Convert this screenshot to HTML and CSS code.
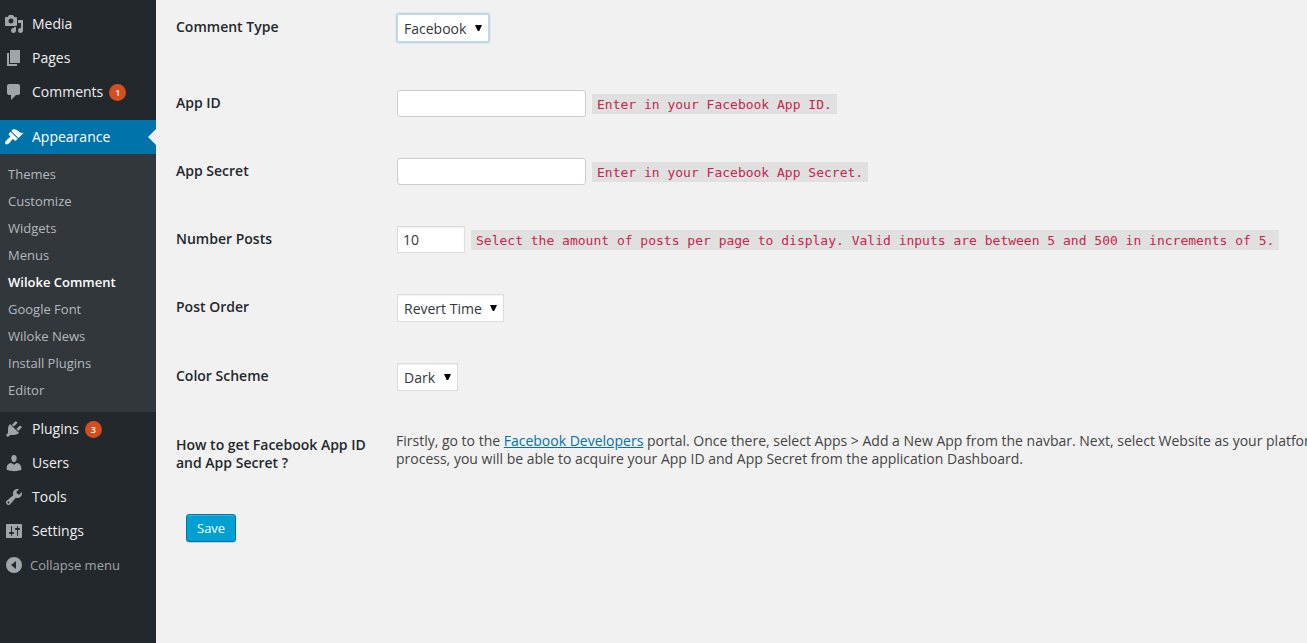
FILE: index.html
```
<!DOCTYPE html>
<html lang="en">
<head>
    <meta charset="UTF-8">
    <meta name="viewport" content="width=device-width, initial-scale=1.0">
    <title>Wiloke Comment</title>
    <link rel="stylesheet" href="styles.css">
</head>
<body>

    <!-- Admin Menu -->
    <nav class="sidebar">
        <ul class="menu">
            <li><a href="#"><svg class="icon" viewBox="0 0 20 20"><path d="M13 11V4c0-.55-.45-1-1-1h-1.67L9 1H5L3.67 3H2c-.55 0-1 .45-1 1v7c0 .55.45 1 1 1h10c.55 0 1-.45 1-1zM7 4.5c1.38 0 2.5 1.12 2.5 2.5S8.38 9.5 7 9.5 4.5 8.38 4.5 7 5.62 4.5 7 4.5zM14 6h5v10.5c0 1.38-1.12 2.5-2.5 2.5S14 17.88 14 16.5s1.12-2.5 2.5-2.5c.17 0 .34.02.5.05V9h-3V6zm-4 8.05V13h2v3.5c0 1.38-1.12 2.5-2.5 2.5S7 17.88 7 16.5 8.12 14 9.5 14c.17 0 .34.02.5.05z"/></svg>Media</a></li>
            <li><a href="#"><svg class="icon" viewBox="0 0 20 20"><path d="M6 15V2h10v13H6zm-1 1h8v2H3V5h2v11z"/></svg>Pages</a></li>
            <li><a href="#"><svg class="icon" viewBox="0 0 20 20"><path d="M5 2h9c1.1 0 2 .9 2 2v7c0 1.1-.9 2-2 2h-2l-5 5v-5H5c-1.1 0-2-.9-2-2V4c0-1.1.9-2 2-2z"/></svg>Comments <span class="badge">1</span></a></li>
        </ul>

        <ul class="menu">
            <li>
                <a href="#" class="current"><svg class="icon" viewBox="0 0 20 20"><path d="M14.48 11.06L7.41 3.99l1.5-1.5c.5-.56 2.3-.47 3.51.32 1.21.8 1.43 1.28 2.91 2.1 1.18.64 2.45 1.26 4.45.85zm-.71.71L6.7 4.7 4.93 6.47c-.39.39-.39 1.02 0 1.41l1.06 1.06c.39.39.39 1.03 0 1.42-.6.6-1.43 1.11-2.21 1.69-.35.26-.7.53-1.01.84C1.43 14.23.4 16.08 1.4 17.07c.99 1 2.84-.03 4.18-1.36.31-.31.58-.66.85-1.02.57-.78 1.08-1.61 1.69-2.21.39-.39 1.02-.39 1.41 0l1.06 1.06c.39.39 1.02.39 1.41 0z"/></svg>Appearance</a>
                <ul class="submenu">
                    <li><a href="#">Themes</a></li>
                    <li><a href="#">Customize</a></li>
                    <li><a href="#">Widgets</a></li>
                    <li><a href="#">Menus</a></li>
                    <li><a href="#" class="active">Wiloke Comment</a></li>
                    <li><a href="#">Google Font</a></li>
                    <li><a href="#">Wiloke News</a></li>
                    <li><a href="#">Install Plugins</a></li>
                    <li><a href="#">Editor</a></li>
                </ul>
            </li>
            <li><a href="#"><svg class="icon" viewBox="0 0 20 20"><path d="M13.11 4.36L9.87 7.6 8 5.73l3.24-3.24c.35-.34 1.05-.2 1.56.32.52.51.66 1.21.31 1.55zm-8 1.77l.91-1.12 9.01 9.01-1.19.84c-.71.71-2.63 1.16-3.82 1.16H6.14L4.9 17.26c-.59.59-1.54.59-2.12 0-.59-.58-.59-1.53 0-2.12l1.24-1.24v-3.88c0-1.13.4-3.19 1.09-3.89zm7.26 3.97l3.24-3.24c.34-.35 1.04-.21 1.55.31.52.51.66 1.21.31 1.55l-3.24 3.25z"/></svg>Plugins <span class="badge">3</span></a></li>
            <li><a href="#"><svg class="icon" viewBox="0 0 20 20"><path d="M10 9.25c-2.27 0-2.73-3.44-2.73-3.44C7 4.02 7.82 2 9.97 2c2.16 0 2.98 2.02 2.71 3.81 0 0-.41 3.44-2.68 3.44zm0 2.57L12.72 10c2.39 0 4.52 2.33 4.52 4.53v2.49s-3.65 1.13-7.24 1.13c-3.65 0-7.24-1.13-7.24-1.13v-2.49c0-2.25 1.94-4.48 4.47-4.48z"/></svg>Users</a></li>
            <li><a href="#"><svg class="icon" viewBox="0 0 20 20"><path d="M16.68 9.77c-1.34 1.34-3.3 1.67-4.95.99l-5.41 6.52c-.99.99-2.59.99-3.58 0s-.99-2.59 0-3.57l6.52-5.42c-.68-1.65-.35-3.61.99-4.95 1.28-1.28 3.12-1.62 4.72-1.06l-2.89 2.89 2.82 2.82 2.86-2.87c.53 1.58.18 3.39-1.08 4.65zM3.81 16.21c.4.39 1.04.39 1.43 0 .4-.4.4-1.04 0-1.43-.39-.4-1.03-.4-1.43 0-.39.39-.39 1.03 0 1.43z"/></svg>Tools</a></li>
            <li><a href="#"><svg class="icon" viewBox="0 0 20 20"><path d="M18 16V4c0-.55-.45-1-1-1H3c-.55 0-1 .45-1 1v12c0 .55.45 1 1 1h14c.55 0 1-.45 1-1zM8 11h1c.55 0 1 .45 1 1s-.45 1-1 1H8v1.5c0 .28-.22.5-.5.5s-.5-.22-.5-.5V13H6c-.55 0-1-.45-1-1s.45-1 1-1h1V5.5c0-.28.22-.5.5-.5s.5.22.5.5V11zm5-2h-1c-.55 0-1-.45-1-1s.45-1 1-1h1V5.5c0-.28.22-.5.5-.5s.5.22.5.5V7h1c.55 0 1 .45 1 1s-.45 1-1 1h-1v5.5c0 .28-.22.5-.5.5s-.5-.22-.5-.5V9z"/></svg>Settings</a></li>
        </ul>

        <button type="button" class="collapse"><svg class="icon" viewBox="0 0 20 20"><path fill-rule="evenodd" d="M10 2a8 8 0 1 0 0 16 8 8 0 0 0 0-16zM12 6v8l-5-4z"/></svg>Collapse menu</button>
    </nav>

    <!-- Settings Form -->
    <main class="content">
        <form>
            <div class="row row-type">
                <label for="comment-type">Comment Type</label>
                <div class="field">
                    <span class="select focused">
                        <select id="comment-type"><option>Facebook</option></select>
                    </span>
                </div>
            </div>
            <div class="row">
                <label for="app-id">App ID</label>
                <div class="field">
                    <input type="text" id="app-id">
                    <code>Enter in your Facebook App ID.</code>
                </div>
            </div>
            <div class="row">
                <label for="app-secret">App Secret</label>
                <div class="field">
                    <input type="text" id="app-secret">
                    <code>Enter in your Facebook App Secret.</code>
                </div>
            </div>
            <div class="row">
                <label for="number-posts">Number Posts</label>
                <div class="field">
                    <input type="number" id="number-posts" value="10" min="5" max="500" step="5">
                    <code>Select the amount of posts per page to display. Valid inputs are between 5 and 500 in increments of 5.</code>
                </div>
            </div>
            <div class="row">
                <label for="post-order">Post Order</label>
                <div class="field">
                    <span class="select">
                        <select id="post-order"><option>Revert Time</option></select>
                    </span>
                </div>
            </div>
            <div class="row">
                <label for="color-scheme">Color Scheme</label>
                <div class="field">
                    <span class="select">
                        <select id="color-scheme"><option>Dark</option></select>
                    </span>
                </div>
            </div>
            <div class="row row-help">
                <h2>How to get Facebook App ID and App Secret ?</h2>
                <p>Firstly, go to the <a href="#">Facebook Developers</a> portal. Once there, select Apps &gt; Add a New App from the navbar. Next, select Website as your platform.<br>process, you will be able to acquire your App ID and App Secret from the application Dashboard.</p>
            </div>
            <button type="submit" class="save">Save</button>
        </form>
    </main>

</body>
</html>
```
FILE: styles.css
```
/* General Styling */
* {
    box-sizing: border-box;
}
body {
    display: flex;
    min-height: 100vh;
    margin: 0;
    background: #f1f1f1;
    color: #444;
    font-family: "Open Sans", sans-serif;
    font-size: 14px;
    line-height: 18px;
}
ul {
    list-style: none;
    margin: 0;
    padding: 0;
}
/* Admin Menu */
.sidebar {
    flex: 0 0 156px;
    padding-top: 7px;
    background: #23282d;
}
.menu {
    margin-bottom: 11px;
}
.menu:last-of-type {
    margin-bottom: 0;
}
.menu a {
    display: flex;
    align-items: center;
    height: 34px;
    padding-left: 4px;
    color: #eee;
    text-decoration: none;
}
.icon {
    width: 20px;
    height: 20px;
    margin-right: 8px;
    fill: #a0a5aa;
}
.badge {
    width: 17px;
    height: 17px;
    margin-left: 6px;
    border-radius: 50%;
    background: #d54e21;
    color: #fff;
    font-size: 9px;
    font-weight: 600;
    line-height: 17px;
    text-align: center;
}
.menu .current {
    position: relative;
    background: #0073aa;
    color: #fff;
}
.current .icon {
    fill: #fff;
}
.current::after {
    content: "";
    position: absolute;
    right: 0;
    top: 9px;
    border: 8px solid transparent;
    border-left-width: 0;
    border-right-color: #f1f1f1;
}
/* Submenu */
.submenu {
    padding: 6px 0 9px;
    background: #32373c;
}
.submenu a {
    height: 27px;
    padding-left: 8px;
    color: #b4b9be;
    font-size: 13px;
}
.submenu .active {
    color: #fff;
    font-weight: 600;
}
.collapse {
    display: flex;
    align-items: center;
    width: 100%;
    height: 34px;
    padding: 0 4px;
    border: 0;
    background: none;
    color: #a0a5aa;
    font-family: inherit;
    font-size: 13px;
    cursor: pointer;
}
.collapse .icon {
    margin-right: 6px;
}
/* Settings Form */
.content {
    flex: 1;
    min-width: 0;
    padding: 14px 0 14px 20px;
    overflow: hidden;
}
.row {
    display: flex;
    align-items: flex-start;
    margin-bottom: 40px;
}
.row-type {
    margin-bottom: 47px;
}
.row label,
.row h2 {
    flex: 0 0 200px;
    margin: 0 20px 0 0;
    padding-top: 4px;
    color: #23282d;
    font-size: 14px;
    font-weight: 600;
    line-height: 18px;
}
.row p {
    margin: 0;
    white-space: nowrap;
}
.row p a {
    color: #0073aa;
}
.field {
    display: flex;
    align-items: flex-start;
    min-height: 28px;
    padding-left: 1px;
}
input,
select {
    border: 1px solid #ddd;
    background: #fff;
    box-shadow: inset 0 1px 2px rgba(0, 0, 0, 0.07);
    color: #32373c;
    font-family: inherit;
    font-size: 14px;
}
input {
    height: 27px;
    padding: 3px 5px;
}
input[type="text"] {
    width: 189px;
    border-color: #ccc;
    border-radius: 3px;
    box-shadow: none;
}
input[type="number"] {
    width: 68px;
    appearance: textfield;
}
code {
    margin: 4px 0 0 6px;
    padding: 2px 5px 0;
    background: #e0e0e0;
    color: #c7254e;
    font-family: "DejaVu Sans Mono", monospace;
    font-size: 13px;
    white-space: nowrap;
}
/* Drop-downs */
.select {
    display: flex;
    position: relative;
    margin-bottom: 1px;
}
.select::after {
    content: "";
    position: absolute;
    right: 7px;
    top: 11px;
    width: 7px;
    height: 6px;
    background: #000;
    clip-path: polygon(0 0, 100% 0, 60% 100%, 40% 100%);
    pointer-events: none;
}
select {
    appearance: none;
    height: 28px;
    padding: 0 21px 0 6px;
    border-radius: 0;
}
.focused select {
    border-color: #c2d9e3;
    box-shadow: 0 0 2px rgba(30, 140, 190, 0.8);
}
/* Save Button */
.row-help {
    margin-bottom: 42px;
}
.save {
    height: 28px;
    margin-left: 10px;
    padding: 0 10px;
    border: 1px solid #0073aa;
    border-radius: 3px;
    background: #00a0d2;
    box-shadow: inset 0 1px 0 rgba(120, 200, 230, 0.5), 0 1px 0 rgba(0, 0, 0, 0.15);
    color: #fff;
    font-family: inherit;
    font-size: 13px;
    cursor: pointer;
}
.save:hover {
    background: #0091cd;
}
```
